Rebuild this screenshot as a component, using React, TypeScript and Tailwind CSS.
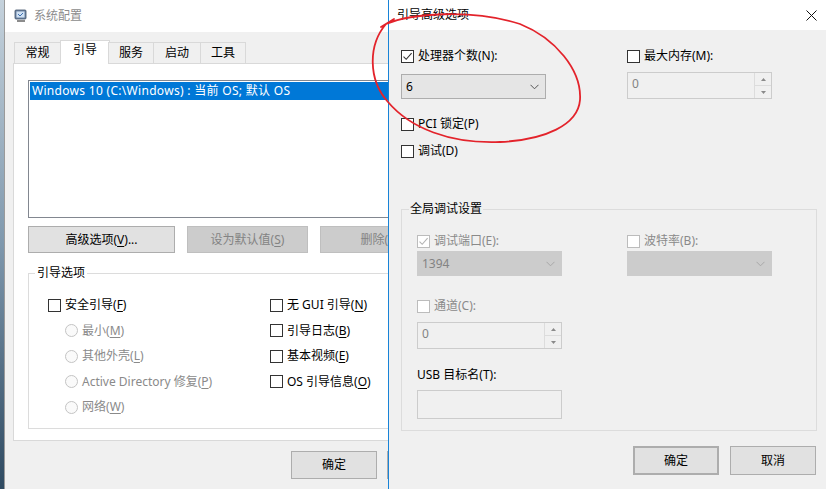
import clsx from "clsx"
import type { ReactNode } from "react"

// Win10 "系统配置" + "引导高级选项" dialog, with the red hand-drawn ring.

function Box({ checked, disabled }: { checked?: boolean; disabled?: boolean }) {
  return (
    <span
      className={clsx(
        "w-[13px] h-[13px] border bg-white flex items-center justify-center shrink-0",
        disabled ? "border-[#bcbcbc]" : "border-[#333333]"
      )}
    >
      {checked && (
        <svg width="11" height="11" viewBox="0 0 11 11">
          <path
            d="M1.5 5.6 L4.2 8.3 L9.6 2.2"
            fill="none"
            stroke={disabled ? "#b4b4b4" : "#333333"}
            strokeWidth="1.1"
          />
        </svg>
      )}
    </span>
  )
}

function Radio() {
  return <span className="w-[13px] h-[13px] rounded-full border border-[#c4c4c4] bg-[#fafafa] shrink-0" />
}

function Key({ label, k, rest = "" }: { label: string; k: string; rest?: string }) {
  return (
    <span>
      {label}(<u className="underline-offset-2">{k}</u>){rest}
    </span>
  )
}

function Btn({
  children,
  disabled,
  primary,
  className,
}: {
  children: ReactNode
  disabled?: boolean
  primary?: boolean
  className?: string
}) {
  return (
    <div
      className={clsx(
        "flex items-center justify-center shrink-0",
        disabled
          ? "bg-[#cccccc] border border-[#bfbfbf] text-[#838383]"
          : "bg-[#e1e1e1] border border-[#adadad] text-black",
        primary && "border-2 border-[#0078d7]",
        className
      )}
    >
      {children}
    </div>
  )
}

function Combo({ value, disabled, className }: { value?: string; disabled?: boolean; className?: string }) {
  return (
    <div
      className={clsx(
        "flex items-center justify-between pl-[4px] pr-[6px] border",
        disabled ? "bg-[#cccccc] border-[#cccccc] text-[#838383]" : "bg-[#e5e5e5] border-[#adadad] text-black",
        className
      )}
    >
      <span>{value}</span>
      <svg width="9" height="6" viewBox="0 0 9 6">
        <path d="M0.5 0.8 L4.5 4.8 L8.5 0.8" fill="none" stroke={disabled ? "#a8a8a8" : "#555555"} strokeWidth="1" />
      </svg>
    </div>
  )
}

function Spin({ value, className }: { value: string; className?: string }) {
  return (
    <div className={clsx("flex border border-[#cccccc] bg-[#f0f0f0]", className)}>
      <span className="flex-1 pl-[4px] pt-[3px] text-[#838383]">{value}</span>
      <div className="w-[17px] border-l border-[#dcdcdc] flex flex-col">
        <div className="flex-1 flex items-center justify-center border-b border-[#dcdcdc]">
          <svg width="5" height="3" viewBox="0 0 5 3">
            <path d="M0 3 L2.5 0 L5 3Z" fill="#8a8a8a" />
          </svg>
        </div>
        <div className="flex-1 flex items-center justify-center">
          <svg width="5" height="3" viewBox="0 0 5 3">
            <path d="M0 0 L2.5 3 L5 0Z" fill="#8a8a8a" />
          </svg>
        </div>
      </div>
    </div>
  )
}

function LeftWindow() {
  const tabs = [
    { t: "常规", w: "w-[47px]" },
    { t: "引导", w: "w-[50px]", on: true },
    { t: "服务", w: "w-[46px]" },
    { t: "启动", w: "w-[48px]" },
    { t: "工具", w: "w-[46px]" },
  ]
  return (
    <div className="w-[384px] h-full overflow-hidden bg-[#f0f0f0] border-l border-[#9a9a9a] flex flex-col">
      <div className="h-[32px] bg-white flex items-center pl-[9px] gap-[6px] shrink-0">
        <svg width="14" height="14" viewBox="0 0 14 14">
          <rect x="1" y="1" width="11" height="9" rx="1" fill="#6e86a6" stroke="#3d4f66" strokeWidth="0.8" />
          <rect x="2.5" y="2.5" width="8" height="6" fill="#cfe0f2" />
          <path d="M4 5 L6 7 L9 4" fill="none" stroke="#3d6fb0" strokeWidth="1" />
          <rect x="3" y="11" width="8" height="2" fill="#8c8c8c" />
        </svg>
        <span className="text-[#8c8c8c]">系统配置</span>
      </div>
      <div className="w-[480px] pl-[8px]">
        <div className="flex pl-[1px] pt-[8px] h-[32px] items-end relative z-10">
          {tabs.map((tab) => (
            <div
              key={tab.t}
              className={clsx(
                "flex items-center justify-center border border-[#d9d9d9]",
                tab.w,
                tab.on ? "h-[24px] bg-white border-b-white -mx-[1px] pb-[4px]" : "h-[22px] bg-[#f0f0f0] -ml-[1px] first:ml-0"
              )}
            >
              {tab.t}
            </div>
          ))}
        </div>
        <div className="-mt-[1px] h-[378px] bg-white border border-[#d9d9d9] pl-[14px] pt-[16px]">
          <div className="h-[138px] border border-[#828790] p-[1px]">
            <div className="h-[18px] bg-[#0078d7] text-white pl-[2px] flex items-center tracking-[0.3px]">
              Windows 10 (C:\Windows) : 当前 OS; 默认 OS
            </div>
          </div>
          <div className="flex gap-[12px] mt-[8px]">
            <Btn className="w-[147px] h-[27px]">
              <Key label="高级选项" k="V" rest="..." />
            </Btn>
            <Btn disabled className="w-[121px] h-[27px]">
              <Key label="设为默认值" k="S" />
            </Btn>
            <Btn disabled className="w-[121px] h-[27px]">
              <Key label="删除" k="D" />
            </Btn>
          </div>
          <fieldset className="mt-[12px] h-[164px] border border-[#dcdcdc]">
            <legend className="px-[2px] ml-[6px] leading-[16px]">引导选项</legend>
            <div className="flex pl-[19px] pt-[11px]">
              <div className="w-[222px] flex flex-col">
                <div className="h-[26px] flex items-center gap-[4px]">
                  <Box />
                  <Key label="安全引导" k="F" />
                </div>
                {[
                  ["最小", "M"],
                  ["其他外壳", "L"],
                  ["Active Directory 修复", "P"],
                  ["网络", "W"],
                ].map(([l, k]) => (
                  <div key={k} className="h-[25.5px] flex items-center gap-[4px] pl-[17px] text-[#8a8a8a]">
                    <Radio />
                    <Key label={l} k={k} />
                  </div>
                ))}
              </div>
              <div className="flex flex-col">
                {[
                  ["无 GUI 引导", "N"],
                  ["引导日志", "B"],
                  ["基本视频", "E"],
                  ["OS 引导信息", "O"],
                ].map(([l, k], i) => (
                  <div key={k} className={clsx("flex items-center gap-[4px]", i === 0 ? "h-[26px]" : "h-[25.5px]")}>
                    <Box />
                    <Key label={l} k={k} />
                  </div>
                ))}
              </div>
            </div>
          </fieldset>
        </div>
        <div className="flex gap-[10px] pl-[278px] mt-[10px]">
          <Btn className="w-[86px] h-[28px]">确定</Btn>
          <Btn className="w-[86px] h-[28px]">取消</Btn>
        </div>
      </div>
    </div>
  )
}

function RightDialog() {
  return (
    <div className="flex-1 h-full bg-[#f0f0f0] border-l border-[#1883d7] flex flex-col">
      <div className="h-[30px] bg-white flex items-center justify-between pl-[8px] pr-[8px] shrink-0">
        <span>引导高级选项</span>
        <svg width="11" height="11" viewBox="0 0 11 11" className="mr-[1px]">
          <path d="M0.5 0.5 L10.5 10.5 M10.5 0.5 L0.5 10.5" stroke="#111111" strokeWidth="1" />
        </svg>
      </div>
      <div className="pl-[12px] pr-[9px]">
        <div className="flex pt-[18px]">
          <div className="w-[226px] flex flex-col">
            <div className="h-[16px] flex items-center gap-[4px]">
              <Box checked />
              <span>处理器个数(N):</span>
            </div>
            <Combo value="6" className="mt-[10px] w-[145px] h-[25px]" />
          </div>
          <div className="flex flex-col">
            <div className="h-[16px] flex items-center gap-[4px]">
              <Box />
              <span>最大内存(M):</span>
            </div>
            <Spin value="0" className="mt-[8px] w-[145px] h-[27px]" />
          </div>
        </div>
        <div className="h-[16px] mt-[17px] flex items-center gap-[4px]">
          <Box />
          <span>PCI 锁定(P)</span>
        </div>
        <div className="h-[16px] mt-[11px] flex items-center gap-[4px]">
          <Box />
          <span>调试(D)</span>
        </div>
        <fieldset className="mt-[42px] border border-[#dcdcdc]">
          <legend className="px-[1px] ml-[7px] leading-[16px]">全局调试设置</legend>
          <div className="pl-[15px] pb-[11px]">
            <div className="flex mt-[16px]">
              <div className="w-[210px] flex flex-col">
                <div className="h-[16px] flex items-center gap-[4px] text-[#8a8a8a]">
                  <Box checked disabled />
                  <span>调试端口(E):</span>
                </div>
                <Combo value="1394" disabled className="mt-[2px] w-[145px] h-[25px]" />
              </div>
              <div className="flex flex-col">
                <div className="h-[16px] flex items-center gap-[4px] text-[#8a8a8a]">
                  <Box disabled />
                  <span>波特率(B):</span>
                </div>
                <Combo disabled className="mt-[2px] w-[145px] h-[25px]" />
              </div>
            </div>
            <div className="h-[16px] mt-[22px] flex items-center gap-[4px] text-[#8a8a8a]">
              <Box disabled />
              <span>通道(C):</span>
            </div>
            <Spin value="0" className="mt-[8px] w-[145px] h-[27px]" />
            <div className="h-[16px] mt-[18px] flex items-center">USB 目标名(T):</div>
            <div className="mt-[7px] w-[145px] h-[29px] border border-[#cccccc] bg-[#f0f0f0]" />
          </div>
        </fieldset>
        <div className="flex justify-end gap-[11px] mt-[15px] pr-[1px]">
          <Btn primary className="w-[86px] h-[29px]">确定</Btn>
          <Btn className="w-[86px] h-[29px]">取消</Btn>
        </div>
      </div>
    </div>
  )
}

export default function App() {
  return (
    <div className="relative w-[826px] h-[489px] overflow-hidden flex text-[12px] leading-[16px] text-black font-['Noto_Sans','Noto_Sans_CJK_SC',sans-serif]">
      <div className="w-[4px] h-full shrink-0 bg-gradient-to-b from-[#c5d2dc] via-[#7f98ad] to-[#2f4a61]" />
      <LeftWindow />
      <RightDialog />
      <svg
        className="absolute inset-0 pointer-events-none"
        width="826"
        height="489"
        viewBox="0 0 826 489"
      >
        <path
          d="M381 27 L394 19 M386 24 C410 14, 470 8, 520 24 C555 38, 582 70, 580 100 C578 125, 545 140, 500 142 C450 144, 410 128, 388 102 C368 80, 368 45, 386 24"
          fill="none"
          stroke="#e3232b"
          strokeWidth="1.8"
          strokeLinecap="round"
        />
      </svg>
    </div>
  )
}
